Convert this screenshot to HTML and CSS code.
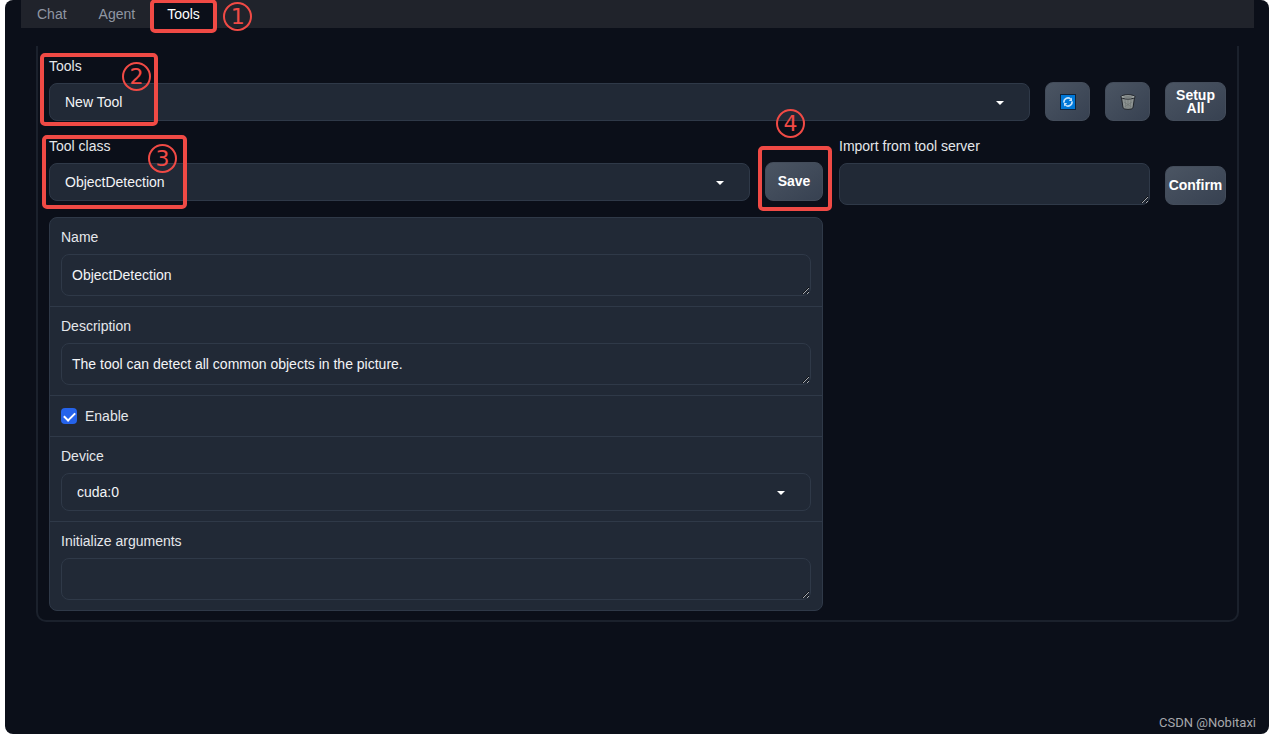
FILE: index.html
```html
<!DOCTYPE html>
<html lang="en">
<head>
    <meta charset="UTF-8">
    <meta name="viewport" content="width=device-width, initial-scale=1.0">
    <title>Tools</title>
    <link rel="stylesheet" href="styles.css">
</head>
<body>

<div class="app">
    <nav class="tabs">
        <button class="tab">Chat</button>
        <button class="tab">Agent</button>
        <div class="marked">
            <button class="tab active">Tools</button>
            <div class="mark mark-tab"><span class="num">1</span></div>
        </div>
    </nav>

    <main class="panel">
        <div class="row">
            <div class="field grow">
                <label for="tools">Tools</label>
                <div class="select">
                    <select id="tools"><option>New Tool</option></select>
                </div>
                <div class="mark mark-tools"><span class="num">2</span></div>
            </div>
            <button class="btn small" aria-label="Refresh">
                <svg width="16" height="16" viewBox="0 0 16 16">
                    <rect x="0.5" y="0.5" width="15" height="15" fill="#0078d7" stroke="#10243c"/>
                    <path d="M4 8.6A4 4 0 0 1 10.6 5M12 7.4A4 4 0 0 1 5.4 11" fill="none" stroke="#c4e2fb" stroke-width="1.6"/>
                    <path d="M12 3.6V7H8.8zM4 12.4V9h3.2z" fill="#c4e2fb"/>
                </svg>
            </button>
            <button class="btn small" aria-label="Delete">
                <svg width="16" height="16" viewBox="0 0 16 16">
                    <path d="M1.4 3L3 13.8Q4 15.4 8 15.4T13 13.8L14.6 3z" fill="#8d9392" stroke="#20242a"/>
                    <path d="M5 6l1 8M8 6v8.5M11 6l-1 8M4 8l7.6 5M12 8l-7.6 5" fill="none" stroke="#6b7271" stroke-width="0.6"/>
                    <ellipse cx="8" cy="2.9" rx="7.2" ry="2.2" fill="#a9afae" stroke="#20242a"/>
                    <ellipse cx="8" cy="2.9" rx="5" ry="1" fill="#7b8281"/>
                </svg>
            </button>
            <button class="btn">Setup All</button>
        </div>

        <div class="columns">
            <div class="column">
                <div class="row">
                    <div class="field grow">
                        <label for="toolClass">Tool class</label>
                        <div class="select">
                            <select id="toolClass"><option>ObjectDetection</option></select>
                        </div>
                        <div class="mark mark-class"><span class="num">3</span></div>
                    </div>
                    <div class="marked">
                        <button class="btn save">Save</button>
                        <div class="mark mark-save"><span class="num">4</span></div>
                    </div>
                </div>

                <form class="form">
                    <div class="block">
                        <label for="name">Name</label>
                        <textarea id="name" rows="1">ObjectDetection</textarea>
                    </div>
                    <div class="block">
                        <label for="description">Description</label>
                        <textarea id="description" rows="1">The tool can detect all common objects in the picture.</textarea>
                    </div>
                    <div class="block check">
                        <input type="checkbox" id="enable" checked>
                        <label for="enable">Enable</label>
                    </div>
                    <div class="block">
                        <label for="device">Device</label>
                        <div class="select">
                            <select id="device"><option>cuda:0</option></select>
                        </div>
                    </div>
                    <div class="block">
                        <label for="args">Initialize arguments</label>
                        <textarea id="args" rows="1"></textarea>
                    </div>
                </form>
            </div>

            <div class="row server">
                <div class="field grow">
                    <label for="server">Import from tool server</label>
                    <textarea id="server" rows="1"></textarea>
                </div>
                <button class="btn">Confirm</button>
            </div>
        </div>
    </main>

    <footer class="credit">CSDN @Nobitaxi</footer>
</div>

</body>
</html>
```
FILE: styles.css
```css
* {
    box-sizing: border-box;
}
body {
    margin: 0;
    padding: 0 3px 5px 5px;
    background: #fff;
    color: #e5e7eb;
    font: 14px/18px "Liberation Sans", Arial, sans-serif;
}
button, select, textarea {
    font: inherit;
    color: inherit;
}
.app {
    display: flex;
    flex-direction: column;
    min-height: calc(100vh - 5px);
    padding: 0 15px 0 16px;
    background: #0b0f19;
    border-radius: 8px;
    color-scheme: dark;
}

/* tabs */
.tabs {
    display: flex;
    height: 28px;
    background: #20232b;
}
.tab {
    height: 28px;
    padding: 0 16px;
    border: none;
    background: none;
    color: #8f96a3;
    cursor: pointer;
}
.tab.active {
    background: #0b0f19;
    color: #fff;
}

/* layout */
.panel {
    margin: 18px 15px 0;
    padding: 11px 11px 9px;
    border: 2px solid #1b212c;
    border-top: none;
    border-radius: 0 0 10px 10px;
}
.row {
    display: flex;
    align-items: flex-end;
    gap: 15px;
}
.columns {
    display: grid;
    grid-template-columns: 2fr 1fr;
    align-items: start;
    gap: 16px;
    margin-top: 16px;
}
.column {
    display: grid;
    gap: 16px;
}
.field, .marked {
    position: relative;
}
.grow {
    flex: 1;
    min-width: 0;
}

/* controls */
label {
    display: block;
    margin-bottom: 8px;
}
.select {
    position: relative;
}
.select::after {
    content: "";
    position: absolute;
    right: 26px;
    top: 18px;
    border: 4px solid transparent;
    border-top-color: #fff;
    border-bottom: none;
    pointer-events: none;
}
select, textarea {
    display: block;
    width: 100%;
    border: 1px solid #2f3948;
    border-radius: 8px;
    background: #212936;
    color: #f3f4f6;
}
select {
    height: 38px;
    padding: 0 15px;
    appearance: none;
}
textarea {
    height: 42px;
    padding: 11px 10px;
    overflow: hidden;
    resize: vertical;
}
.btn {
    width: 61px;
    height: 39px;
    padding: 0;
    border: 1px solid #434c5a;
    border-radius: 8px;
    background: linear-gradient(to bottom right, #4b5563, #374151);
    color: #fff;
    font-weight: bold;
    line-height: 13px;
    cursor: pointer;
}
.btn.small {
    width: 45px;
}
.btn.save {
    display: block;
    width: 58px;
}
.btn svg {
    display: block;
    margin: auto;
}

/* tool form */
.form {
    border: 1px solid #2f3948;
    border-radius: 8px;
    background: #212936;
}
.block {
    padding: 10px 11px;
}
.block + .block {
    border-top: 1px solid #2f3948;
}
.check {
    display: flex;
    align-items: center;
    gap: 8px;
    height: 41px;
}
.check label {
    margin: 0;
}
.check input {
    display: grid;
    place-items: center;
    width: 16px;
    height: 16px;
    margin: 0;
    appearance: none;
    border-radius: 4px;
    background: #2563eb;
}
.check input:checked::before {
    content: "";
    width: 9px;
    height: 5px;
    border: solid #fff;
    border-width: 0 0 2px 2px;
    transform: translateY(-1px) rotate(-45deg);
}

/* numbered marks over the steps */
.mark {
    position: absolute;
    border: 4px solid #f04a45;
    border-radius: 5px;
    pointer-events: none;
}
.mark-tab {
    inset: -1px -1px -5px -1px;
}
.mark-tools {
    left: -9px;
    top: -4px;
    width: 118px;
    height: 73px;
}
.mark-class {
    left: -7px;
    top: -2px;
    width: 145px;
    height: 74px;
}
.mark-save {
    inset: -16px -9px -10px -7px;
}
.num {
    position: absolute;
    width: 29px;
    height: 29px;
    border: 2px solid #f04a45;
    border-radius: 50%;
    color: #f04a45;
    font: 22px/25px "DejaVu Sans", sans-serif;
    text-align: center;
}
.mark-tab .num {
    left: 69px;
    top: -1px;
}
.mark-tools .num {
    right: 3px;
    top: 5px;
}
.mark-class .num {
    right: 6px;
    top: 5px;
}
.mark-save .num {
    left: 14px;
    top: -41px;
}

.credit {
    margin: auto -2px 0 0;
    padding-bottom: 2px;
    color: #a6a8ac;
    font: 13px/18px Roboto, sans-serif;
    text-align: right;
}
```
